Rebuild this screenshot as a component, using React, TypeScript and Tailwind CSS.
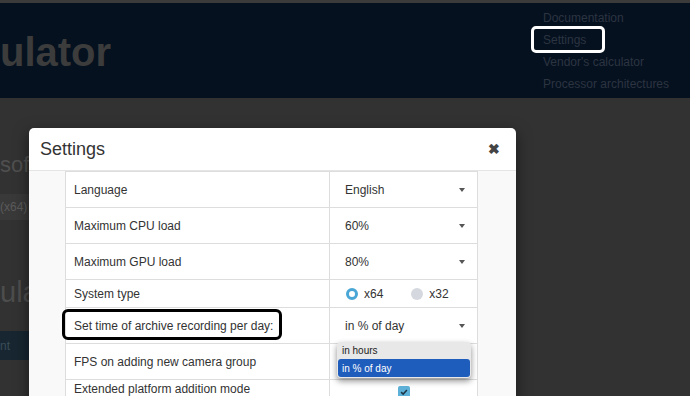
import React from "react";

function Caret() {
  return <span className="block h-0 w-0 border-x-[3px] border-t-[4px] border-x-transparent border-t-[#555]" />;
}

function SelectCell({ value }: { value: string }) {
  return (
    <div className="flex flex-1 items-center justify-between pl-[15px] pr-[12px]">
      <span>{value}</span>
      <Caret />
    </div>
  );
}

function Row({ label, children, tall = true }: { label: React.ReactNode; children: React.ReactNode; tall?: boolean }) {
  return (
    <div className={`flex border-b border-[#dddddd] ${tall ? "h-[36px]" : "h-[28px]"}`}>
      <div className="flex w-[264px] items-center border-r border-[#dddddd] pl-[8px]">{label}</div>
      {children}
    </div>
  );
}

export default function App() {
  return (
    <div className="relative h-[396px] w-[690px] overflow-hidden bg-[#323232] font-['Liberation_Sans',Arial,sans-serif]">
      <div className="h-[3px] bg-[#3b3b3b]" />

      {/* Page header (behind overlay) */}
      <header className="flex h-[95px] bg-[#05111f]">
        <div className="pt-[29px] text-[40px] font-bold leading-[40px] text-[#3c3c3c]">ulator</div>
        <nav className="ml-auto flex w-[147px] flex-col pt-[4px] text-[12px] leading-[22px] text-[#2c3441]">
          <span>Documentation</span>
          <span className="relative self-start">
            Settings
            <span className="absolute -left-[12px] -top-[3px] h-[27px] w-[74px] rounded-[5px] border-[3px] border-white" />
          </span>
          <span>Vendor's calculator</span>
          <span>Processor architectures</span>
        </nav>
      </header>

      {/* Page content (behind overlay) */}
      <div className="flex w-[29px] flex-col overflow-hidden">
        <div className="whitespace-nowrap pt-[54px] text-[22px] leading-[26px] text-[#4f4f4f]">sof</div>
        <div className="mt-[16px] flex h-[26px] items-center whitespace-nowrap bg-[#393939] text-[12px] text-[#5b5b5b]">(x64)</div>
        <div className="mt-[56px] whitespace-nowrap text-[29px] leading-[32px] text-[#4d4d4d]">ula</div>
        <div className="mt-[23px] flex h-[29px] items-center bg-[#172630] text-[12px] text-[#3a4c58]">nt</div>
      </div>

      {/* Modal */}
      <div className="absolute left-[29px] top-[128px] h-[300px] w-[487px] overflow-hidden rounded-[5px] bg-white shadow-[0_5px_15px_rgba(0,0,0,0.5)]">
        <div className="flex h-[43px] items-center justify-between border-b border-[#e5e5e5] pl-[11px] pr-[16px]">
          <span className="text-[18px] text-[#333]">Settings</span>
          <span className="text-[14px] font-bold leading-none text-[#444]">✖</span>
        </div>
        <div className="h-full bg-[#f9f9f9] pl-[36px]">
          <div className="relative w-[413px] border-x border-t border-[#dddddd] bg-white text-[12px] text-[#333]">
            <Row label="Language">
              <SelectCell value="English" />
            </Row>
            <Row label="Maximum CPU load">
              <SelectCell value="60%" />
            </Row>
            <Row label="Maximum GPU load">
              <SelectCell value="80%" />
            </Row>
            <Row label="System type" tall={false}>
              <div className="flex flex-1 items-center pl-[16px]">
                <span className="h-[12px] w-[12px] rounded-full border-[3px] border-[#4aa6d5] bg-white" />
                <span className="ml-[6px]">x64</span>
                <span className="ml-[28px] h-[12px] w-[12px] rounded-full bg-[#d5d9df]" />
                <span className="ml-[6px]">x32</span>
              </div>
            </Row>
            <Row
              label={
                <span className="relative">
                  Set time of archive recording per day:
                  <span className="absolute -left-[12px] -top-[8px] h-[31px] w-[220px] rounded-[6px] border-[3px] border-black" />
                </span>
              }
            >
              <SelectCell value="in % of day" />
            </Row>
            <Row label="FPS on adding new camera group">
              <div className="flex-1" />
            </Row>
            <div className="flex h-[40px]">
              <div className="w-[264px] border-r border-[#dddddd] pl-[8px] pt-[1px] leading-[16px]">Extended platform addition mode</div>
              <div className="flex flex-1 justify-center pt-[6px]">
                <span className="flex h-[12px] w-[12px] items-center justify-center rounded-[2px] bg-[#5db1d8]">
                  <svg viewBox="0 0 12 12" className="h-[10px] w-[10px]">
                    <path d="M2.5 6.2 L5 8.5 L9.5 3.5" fill="none" stroke="#1d3444" strokeWidth="1.8" />
                  </svg>
                </span>
              </div>
            </div>

            {/* Open dropdown list */}
            <div className="absolute left-[271px] top-[170px] flex w-[134px] flex-col rounded-[4px] bg-[#e8e8e8] px-[1px] pb-[1px] text-[10px] shadow-[0_3px_6px_rgba(0,0,0,0.45)]">
              <span className="flex h-[17px] items-center pl-[4px] text-[#222]">in hours</span>
              <span className="flex h-[18px] items-center rounded-[3px] bg-[#1f5dbd] pl-[4px] text-white">in % of day</span>
            </div>
          </div>
        </div>
      </div>
    </div>
  );
}
